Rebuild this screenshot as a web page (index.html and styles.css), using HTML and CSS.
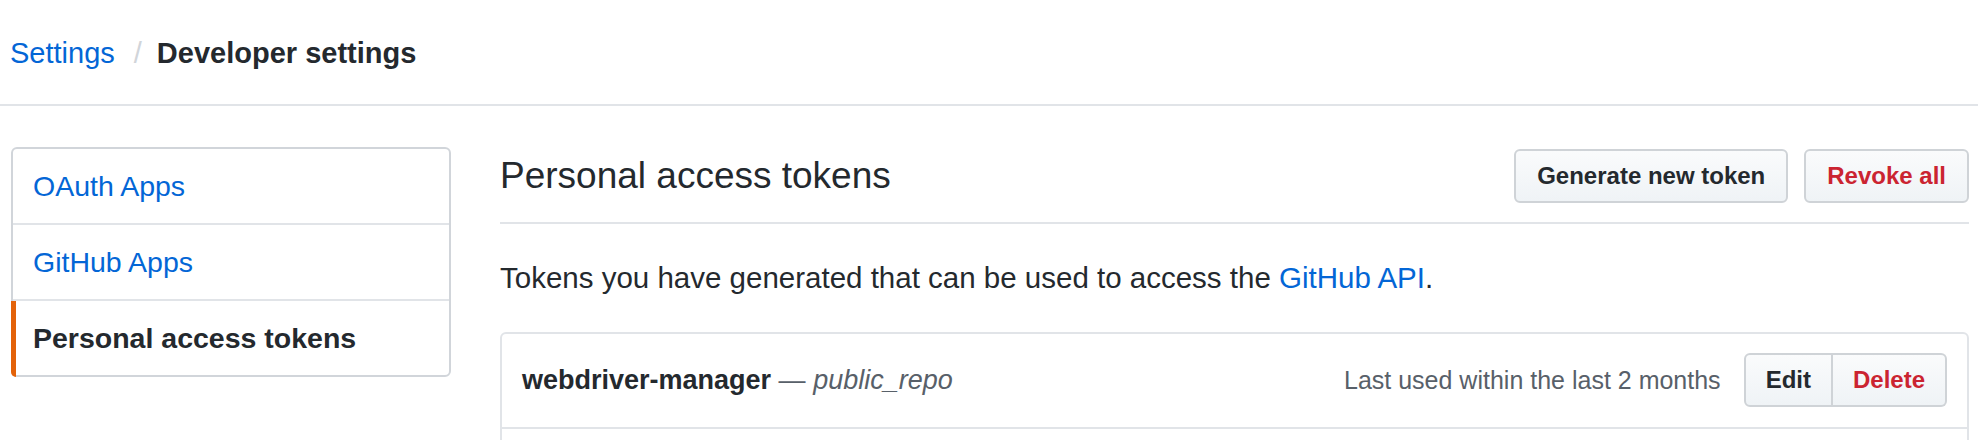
FILE: index.html
```html
<!DOCTYPE html>
<html lang="en">
<head>
<meta charset="utf-8">
<title>Personal access tokens</title>
<link rel="stylesheet" href="styles.css">
</head>
<body>
<header class="page-head">
  <nav class="crumbs">
    <a class="crumb-link" href="#">Settings</a><span class="crumb-sep">/</span><span class="crumb-current">Developer settings</span>
  </nav>
</header>
<div class="layout">
  <aside class="side-menu">
    <a class="menu-item" href="#">OAuth Apps</a>
    <a class="menu-item" href="#">GitHub Apps</a>
    <a class="menu-item is-selected" href="#">Personal access tokens</a>
  </aside>
  <main class="content">
    <div class="subhead">
      <h2 class="subhead-title">Personal access tokens</h2>
      <div class="subhead-actions">
        <button class="btn">Generate new token</button>
        <button class="btn btn-danger">Revoke all</button>
      </div>
    </div>
    <p class="intro">Tokens you have generated that can be used to access the <a class="link" href="#">GitHub API</a>.</p>
    <div class="token-box">
      <div class="token-row">
        <div class="token-name"><strong>webdriver-manager</strong> <span class="token-scope">— <em>public_repo</em></span></div>
        <div class="token-meta">
          <span class="last-used">Last used within the last 2 months</span>
          <div class="btn-group">
            <button class="btn btn-group-item">Edit</button>
            <button class="btn btn-group-item btn-danger">Delete</button>
          </div>
        </div>
      </div>
      <div class="token-row token-row-next"></div>
    </div>
  </main>
</div>
</body>
</html>
```

FILE: styles.css
```css
* { box-sizing: border-box; }

html, body {
  margin: 0;
  padding: 0;
  background: #ffffff;
}

body {
  font-family: "Liberation Sans", Arial, Helvetica, sans-serif;
  color: #24292e;
  overflow: hidden;
}

a { text-decoration: none; }

.page-head {
  padding: 31px 10px 29px 10px;
  border-bottom: 2px solid #e1e4e8;
}

.crumbs {
  font-size: 29px;
  line-height: 44px;
  display: flex;
  align-items: baseline;
}

.crumb-link { color: #0366d6; }

.crumb-sep {
  color: #d1d5da;
  margin: 0 15px 0 19px;
}

.crumb-current {
  font-weight: bold;
  color: #24292e;
}

.layout {
  display: grid;
  grid-template-columns: 440px 1fr;
  column-gap: 49px;
  padding: 0 9px 0 11px;
  margin-top: 41px;
  align-items: start;
}

.side-menu {
  display: flex;
  flex-direction: column;
  border: 2px solid #d1d5da;
  border-radius: 6px;
}

.menu-item {
  position: relative;
  display: block;
  font-size: 28.5px;
  line-height: 34px;
  padding: 20px 20px 20px 20px;
  color: #0366d6;
  border-top: 2px solid #e1e4e8;
}

.menu-item:first-child { border-top: 0; }

.menu-item.is-selected {
  color: #24292e;
  font-weight: bold;
}

.menu-item.is-selected::before {
  content: "";
  position: absolute;
  left: -2px;
  top: 0;
  bottom: -2px;
  width: 5px;
  background: #e36209;
  border-bottom-left-radius: 6px;
}

.content { min-width: 0; }

.subhead {
  display: flex;
  align-items: center;
  justify-content: space-between;
  padding: 2px 0 19px 0;
  border-bottom: 2px solid #e1e4e8;
}

.subhead-title {
  margin: 0;
  font-size: 37px;
  line-height: 44px;
  font-weight: normal;
  color: #24292e;
}

.subhead-actions {
  display: flex;
  gap: 16px;
}

.btn {
  font-family: inherit;
  font-size: 24px;
  font-weight: bold;
  line-height: 28px;
  padding: 11px 21px;
  color: #24292e;
  background: linear-gradient(#fafbfc, #eff3f6);
  border: 2px solid #cfd3d7;
  border-radius: 6px;
  cursor: pointer;
  white-space: nowrap;
}

.btn-danger { color: #cb2431; }

.intro {
  margin: 32px 0 32px 0;
  font-size: 29.5px;
  line-height: 44px;
  color: #24292e;
}

.link { color: #0366d6; }

.token-box {
  border: 2px solid #e1e4e8;
  border-radius: 6px;
}

.token-row {
  display: flex;
  align-items: center;
  justify-content: space-between;
  padding: 19px 20px 20px 20px;
}

.token-row-next {
  border-top: 2px solid #e1e4e8;
  min-height: 94px;
}

.token-name {
  font-size: 27px;
  line-height: 34px;
  color: #24292e;
}

.token-scope {
  color: #586069;
}

.token-meta {
  display: flex;
  align-items: center;
  gap: 23px;
}

.last-used {
  font-size: 25px;
  color: #586069;
}

.btn-group {
  display: flex;
}

.btn-group-item {
  padding: 11px 20px;
  border-radius: 0;
}

.btn-group-item:first-child {
  border-radius: 6px 0 0 6px;
}

.btn-group-item:last-child {
  border-radius: 0 6px 6px 0;
  border-left: 0;
}
```
